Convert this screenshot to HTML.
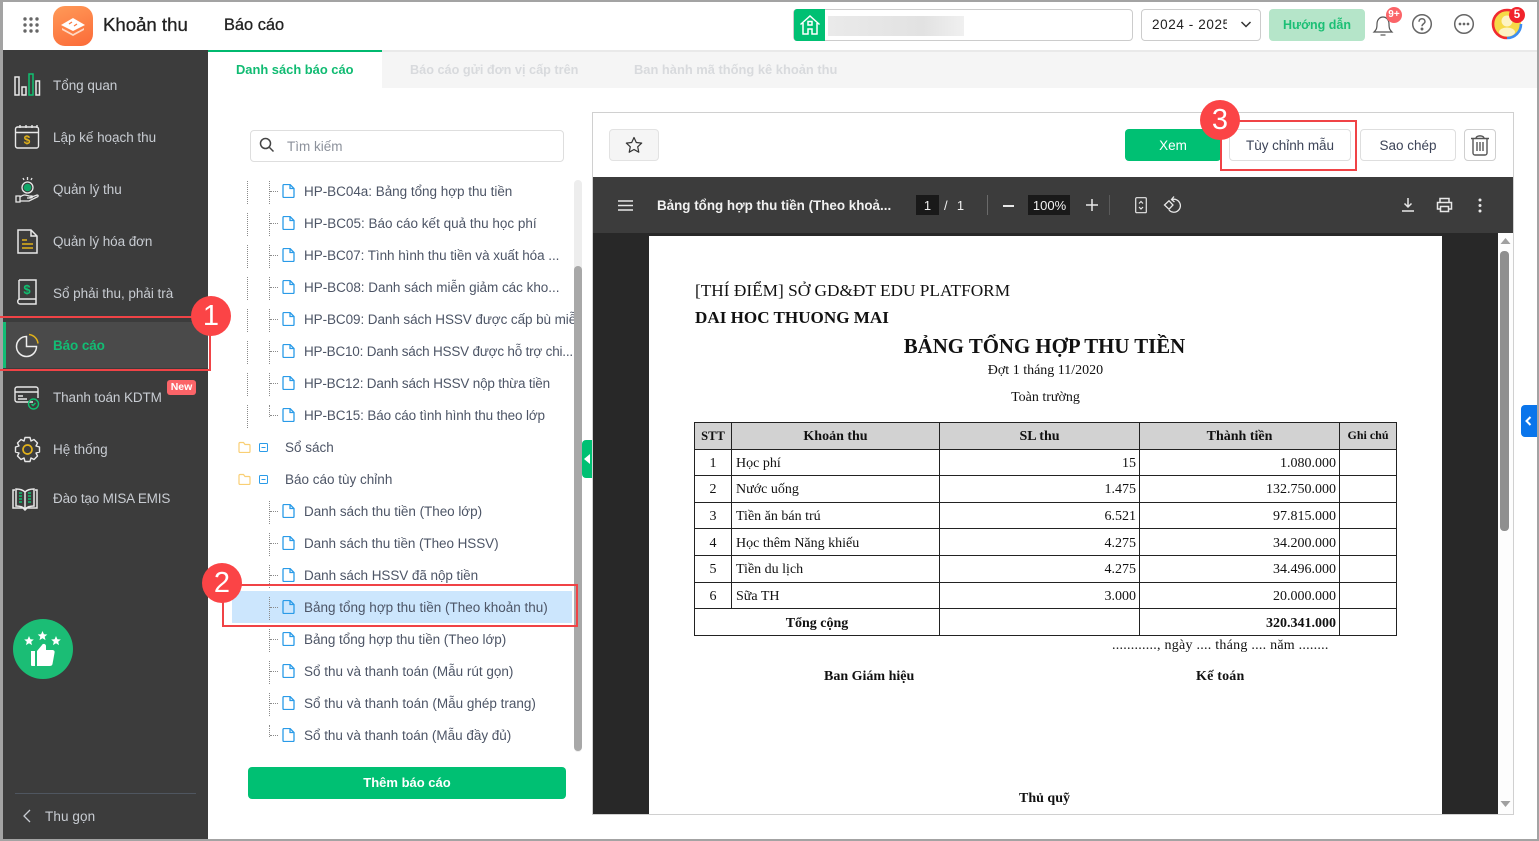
<!DOCTYPE html>
<html lang="vi"><head><meta charset="utf-8"><title>Khoản thu</title>
<style>
html,body{margin:0;padding:0;background:#fff}
#r{position:relative;width:1539px;height:841px;overflow:hidden;background:#fff;font-family:"Liberation Sans",sans-serif;color:#333}
#r div,#r svg{position:absolute}
.t{white-space:nowrap}
.s{left:53px;font-size:13.5px;line-height:20px;color:#c8ccd2;letter-spacing:-.03px}
.n{left:304px;font-size:13.5px;line-height:20px;color:#4d5566;white-space:nowrap}
.v1{width:0;border-left:1px dotted #8a8a8a;height:23px}
.h1{height:0;width:8px;border-top:1px dotted #8a8a8a;left:270px}
.p{font-family:"Liberation Serif",serif;color:#111;white-space:nowrap;line-height:16px;font-size:14px}
.b{font-weight:bold}
.ln{background:#222}
.btn{border:1px solid #dedede;border-radius:4px;box-sizing:border-box;background:#fff;text-align:center;line-height:31px;font-size:13.5px;color:#3d4458;top:129px;height:32px}
.red{border:2px solid #f04346;box-sizing:border-box}
.bd{width:40px;height:40px;border-radius:50%;background:#fb4446;color:#fff;text-align:center;font-size:29px;line-height:40px}
</style></head><body><div id="r">

<!-- header -->
<div style="left:0;top:50px;width:1539px;height:2px;background:#e9e9e9"></div>
<svg style="left:23px;top:17px" width="16" height="16" fill="#666"><circle cx="2" cy="2" r="1.7"/><circle cx="8" cy="2" r="1.7"/><circle cx="14" cy="2" r="1.7"/><circle cx="2" cy="8" r="1.7"/><circle cx="8" cy="8" r="1.7"/><circle cx="14" cy="8" r="1.7"/><circle cx="2" cy="14" r="1.7"/><circle cx="8" cy="14" r="1.7"/><circle cx="14" cy="14" r="1.7"/></svg>
<div style="left:53px;top:6px;width:40px;height:40px;border-radius:12px;background:linear-gradient(160deg,#ff9a58,#fb6a38)"></div>
<svg style="left:60px;top:15px" width="26" height="24"><path d="M13 3L25 10 13 16 1 10Z" fill="#fff"/><path d="M2 13l11 6 11-6v2l-11 6-11-6z" fill="#ffd8c4"/><path d="M9 9l3-2M17 9l-3 2" stroke="#fb7a40" stroke-width="1.3"/></svg>
<div class="t" style="left:103px;top:13px;font-size:18.6px;line-height:24px;color:#222;-webkit-text-stroke:.3px #222">Khoản thu</div>
<div class="t" style="left:224px;top:14px;font-size:16.4px;line-height:22px;color:#222;-webkit-text-stroke:.3px #222">Báo cáo</div>

<div style="left:793px;top:9px;width:340px;height:32px;border:1px solid #ccc;border-radius:4px;box-sizing:border-box"></div>
<div style="left:794px;top:9px;width:31px;height:32px;background:#00c073;border-radius:3px 0 0 3px"></div>
<svg style="left:799px;top:14px" width="22" height="22" fill="none" stroke="#fff" stroke-width="1.5"><path d="M1.5 10.500L11 2l9.500 8.500M4 9v11h5v-5h4v5h5V9"/><rect x="9" y="7.500" width="4" height="3.500"/></svg>
<div style="left:828px;top:16px;width:136px;height:20px;background:linear-gradient(90deg,#eaeaea,#e2e2e2 70%,#f0f0f0)"></div>

<div style="left:1141px;top:9px;width:120px;height:32px;border:1px solid #ccc;border-radius:4px;box-sizing:border-box"></div>
<div class="t" style="left:1152px;top:15px;width:75px;overflow:hidden;font-size:13.5px;line-height:20px;color:#222;letter-spacing:.6px">2024 - 2025</div>
<svg style="left:1240px;top:20px" width="12" height="10" fill="none" stroke="#333" stroke-width="1.5"><path d="M1.500 2l4.500 4.500L10.500 2"/></svg>
<div class="t" style="left:1269px;top:9px;width:96px;height:32px;background:#b5e5c9;border-radius:4px;text-align:center;line-height:33px;font-size:12.5px;font-weight:bold;color:#1cbf75">Hướng dẫn</div>

<svg style="left:1371px;top:13px" width="24" height="25" fill="none" stroke="#555" stroke-width="1.2"><path d="M3 19c2-2 3-3 3-8 0-4 2.500-7 6-7s6 3 6 7c0 5 1 6 3 8z"/><path d="M9.500 22h5"/></svg>
<div class="t" style="left:1386px;top:7px;width:16px;height:16px;border-radius:50%;background:#fb6468;color:#fff;font-size:10px;font-weight:bold;line-height:16px;text-align:center">9+</div>
<svg style="left:1411px;top:13px" width="22" height="22" fill="none" stroke="#666" stroke-width="1.500"><circle cx="11" cy="11" r="9.300"/><path d="M8 8.700c0-4 6-4 6 0 0 2-3 2.200-3 4.500"/><circle cx="11" cy="16" r=".7" fill="#666"/></svg>
<svg style="left:1453px;top:13px" width="22" height="22" fill="none" stroke="#666" stroke-width="1.500"><circle cx="11" cy="11" r="9.300"/><circle cx="7" cy="11" r=".6" fill="#666"/><circle cx="11" cy="11" r=".6" fill="#666"/><circle cx="15" cy="11" r=".6" fill="#666"/></svg>
<svg style="left:1491px;top:8px" width="34" height="34"><circle cx="16" cy="16" r="14" fill="#f6d947"/><path d="M16 2a14 14 0 0 0 0 28" fill="none" stroke="#f02a30" stroke-width="2.600"/><path d="M16 30a14 14 0 0 0 14-14" fill="none" stroke="#3d8df0" stroke-width="2.600"/><path d="M16 2a14 14 0 0 1 8 2.500" fill="none" stroke="#f02a30" stroke-width="2.600"/><circle cx="16" cy="13" r="5.500" fill="#fdf3c4"/><ellipse cx="16" cy="24" rx="8" ry="4.500" fill="#fdf3c4"/></svg>
<div class="t" style="left:1509px;top:7px;width:16px;height:16px;border-radius:50%;background:#f1232b;color:#fff;font-size:11.500px;font-weight:bold;line-height:16px;text-align:center">5</div>

<!-- sidebar -->
<div style="left:3px;top:50px;width:205px;height:789px;background:#3c3c3c"></div>
<div style="left:3px;top:322px;width:205px;height:46px;background:#4a4a4a"></div>
<div style="left:3px;top:322px;width:3px;height:46px;background:#12bd74"></div>

<svg style="left:14px;top:73px" width="27" height="24" fill="none" stroke="#e8e8e8" stroke-width="1.500"><rect x="1" y="4" width="4" height="18"/><rect x="8" y="14" width="4" height="8"/><rect x="15" y="1" width="4" height="21" stroke="#10c070"/><rect x="22" y="8" width="3.500" height="14"/></svg>
<div class="t s" style="top:76px">Tổng quan</div>

<svg style="left:14px;top:124px" width="27" height="27" fill="none" stroke="#e8e8e8" stroke-width="1.400"><rect x="1.500" y="3" width="23" height="21" rx="2"/><path d="M1.500 8.500h23"/><path d="M6 1v3M12 1v3M18 1v3M23 1v3"/><text x="13" y="20" font-size="12" font-weight="bold" fill="#e2b21a" stroke="none" text-anchor="middle" font-family="Liberation Sans">$</text></svg>
<div class="t s" style="top:128px">Lập kế hoạch thu</div>

<svg style="left:15px;top:176px" width="25" height="27" fill="none" stroke="#e8e8e8" stroke-width="1.300"><circle cx="12.500" cy="11.500" r="5.500"/><path d="M12.500 1v3M8 2l1 2M17 2l-1 2"/><circle cx="12.500" cy="11.500" r="3.800" fill="#10a868" stroke="none"/><path d="M1 20h4v6H1zM5 21c4-3 6-2 9-1h3c1 1 0 2-2 2h-3M14 22l8-3c2 0 1 2 0 2l-8 4H5"/></svg>
<div class="t s" style="top:180px">Quản lý thu</div>

<svg style="left:16px;top:229px" width="23" height="26" fill="none" stroke="#e8e8e8" stroke-width="1.500"><path d="M2 1h13l6 6v17H2z"/><path d="M15 1v6h6"/><path d="M6 11h5M6 15h11M6 19h11" stroke="#e2b21a"/></svg>
<div class="t s" style="top:232px;letter-spacing:-.07px">Quản lý hóa đơn</div>

<svg style="left:16px;top:279px" width="22" height="27" fill="none" stroke="#e8e8e8" stroke-width="1.500"><path d="M3 1h17v19H4c-3 0-3 5 0 5h16v-5M3 1v20"/><text x="11" y="15" font-size="13" font-weight="bold" fill="#10c070" stroke="none" text-anchor="middle" font-family="Liberation Sans">$</text></svg>
<div class="t s" style="top:284px">Sổ phải thu, phải trà</div>

<svg style="left:15px;top:333px" width="25" height="25" fill="none" stroke="#eee" stroke-width="1.500"><path d="M11.500 3.500a10 10 0 1 0 10 10h-10z"/><path d="M14 1.500a10 10 0 0 1 9 9" stroke="#e2b21a"/></svg>
<div class="t s b" style="top:336px;color:#12bd74;letter-spacing:-.1px">Báo cáo</div>

<svg style="left:14px;top:385px" width="27" height="27" fill="none" stroke="#e8e8e8" stroke-width="1.400"><path d="M19 17H3a2 2 0 0 1-2-2V4a2 2 0 0 1 2-2h19a2 2 0 0 1 2 2v9"/><path d="M1 7h23M4 11h5M4 14h9"/><circle cx="19.500" cy="19" r="5" stroke="#10c070"/><path d="M17.500 19l1.500 1.500 2.500-2.500" stroke="#10c070"/></svg>
<div class="t s" style="top:388px;letter-spacing:-.1px">Thanh toán KDTM</div>
<div class="t" style="left:167px;top:380px;width:29px;height:15px;background:#fb6468;border-radius:3px;color:#fff;font-size:10.500px;font-weight:bold;line-height:15px;text-align:center">New</div>

<svg style="left:14px;top:436px" width="27" height="27" fill="none" stroke="#e8e8e8" stroke-width="1.400"><path d="M11 1.500h5l1 3.500 3-1.500 3.500 3.500-1.500 3 3.500 1v5l-3.500 1 1.500 3-3.500 3.500-3-1.500-1 3.500h-5l-1-3.500-3 1.500L3.500 20l1.500-3-3.500-1v-5l3.500-1-1.500-3L7 3.500l3 1.500z" stroke-linejoin="round"/><circle cx="13.500" cy="13.500" r="4.500" stroke="#e2b21a" stroke-width="1.700"/></svg>
<div class="t s" style="top:440px">Hệ thống</div>

<svg style="left:12px;top:487px" width="26" height="24" fill="none" stroke="#e8e8e8" stroke-width="1.500"><path d="M3 3H1v18h10l2 2 2-2h10V3h-2"/><path d="M13 5c-2-2-6-3-9-3v17c3 0 7 1 9 3 2-2 6-3 9-3V2c-3 0-7 1-9 3zM13 5v17"/><path d="M7 6h3M7 9h3M7 12h3M7 15h3M16 6h3M16 9h3M16 12h3M16 15h3" stroke="#10c070"/></svg>
<div class="t s" style="top:489px;letter-spacing:-.17px">Đào tạo MISA EMIS</div>

<div style="left:13px;top:619px;width:60px;height:60px;border-radius:50%;background:#1bbd75"></div>
<svg style="left:24px;top:630px" width="38" height="38" fill="#fff"><path d="M5 6l1.400 3.200 3.400.3-2.600 2.200.8 3.400L5 13.300 2 15.100l.8-3.400L.2 9.500l3.400-.3z"/><path d="M18.500 1l1.400 3.200 3.400.3-2.600 2.200.8 3.400-3-1.800-3 1.800.8-3.400L13.700 4.500l3.400-.3z"/><path d="M32 6l1.400 3.200 3.400.3-2.600 2.200.8 3.400-3-1.800-3 1.800.8-3.400L27.200 9.500l3.400-.3z"/><path d="M7 21h4v15H8a1 1 0 0 1-1-1z"/><path d="M13 21l5-6c1-2 4-1 4 1v4h6c2 0 3 1 2.500 3l-2 11c-.3 1.500-1.500 2-3 2H13z"/></svg>

<div style="left:15px;top:793px;width:181px;height:1px;background:#4f5660"></div>
<svg style="left:22px;top:809px" width="10" height="14" fill="none" stroke="#c8ccd2" stroke-width="1.300"><path d="M8 1L2 7l6 6"/></svg>
<div class="t s" style="left:45px;top:807px;letter-spacing:.1px">Thu gọn</div>

<!-- tabs -->
<div style="left:208px;top:52px;width:1329px;height:36px;background:#f5f5f5"></div>
<div style="left:208px;top:50px;width:174px;height:38px;background:#fff;border-top:2px solid #00b96f;box-sizing:border-box"></div>
<div class="t b" style="left:236px;top:60px;font-size:12.9px;line-height:20px;color:#10bb72">Danh sách báo cáo</div>
<div class="t b" style="left:410px;top:60px;font-size:12.7px;line-height:20px;color:#d8dadd">Báo cáo gửi đơn vị cấp trên</div>
<div class="t b" style="left:634px;top:60px;font-size:12.9px;line-height:20px;color:#d8dadd">Ban hành mã thống kê khoản thu</div>

<!-- left tree -->
<div style="left:250px;top:130px;width:314px;height:32px;border:1px solid #dedede;border-radius:4px;box-sizing:border-box"></div>
<svg style="left:259px;top:137px" width="16" height="16" fill="none" stroke="#444" stroke-width="1.500"><circle cx="6.500" cy="6.500" r="5"/><path d="M10.500 10.500l4 4"/></svg>
<div class="t" style="left:287px;top:137px;font-size:13.5px;line-height:20px;color:#8c919b">Tìm kiếm</div>

<div style="left:232px;top:591px;width:340px;height:32px;background:#cce6fd"></div>

<div class="v1" style="left:247px;top:181px"></div><div class="v1" style="left:247px;top:213px"></div><div class="v1" style="left:247px;top:245px"></div><div class="v1" style="left:247px;top:277px"></div><div class="v1" style="left:247px;top:309px"></div><div class="v1" style="left:247px;top:341px"></div><div class="v1" style="left:247px;top:373px"></div><div class="v1" style="left:247px;top:405px"></div>

<div class="v1" style="left:269px;top:181px"></div><div class="h1" style="top:191px"></div>
<div class="v1" style="left:269px;top:213px"></div><div class="h1" style="top:223px"></div>
<div class="v1" style="left:269px;top:245px"></div><div class="h1" style="top:255px"></div>
<div class="v1" style="left:269px;top:277px"></div><div class="h1" style="top:287px"></div>
<div class="v1" style="left:269px;top:309px"></div><div class="h1" style="top:319px"></div>
<div class="v1" style="left:269px;top:341px"></div><div class="h1" style="top:351px"></div>
<div class="v1" style="left:269px;top:373px"></div><div class="h1" style="top:383px"></div>
<div class="v1" style="left:269px;top:405px;height:12px"></div><div class="h1" style="top:415px"></div>
<div class="v1" style="left:269px;top:501px"></div><div class="h1" style="top:511px"></div>
<div class="v1" style="left:269px;top:533px"></div><div class="h1" style="top:543px"></div>
<div class="v1" style="left:269px;top:565px"></div><div class="h1" style="top:575px"></div>
<div class="v1" style="left:269px;top:597px"></div><div class="h1" style="top:607px"></div>
<div class="v1" style="left:269px;top:629px"></div><div class="h1" style="top:639px"></div>
<div class="v1" style="left:269px;top:661px"></div><div class="h1" style="top:671px"></div>
<div class="v1" style="left:269px;top:693px"></div><div class="h1" style="top:703px"></div>
<div class="v1" style="left:269px;top:725px;height:12px"></div><div class="h1" style="top:735px"></div>

<svg width="0" height="0" style="left:0;top:0"><defs><g id="f"><path d="M1 1.500a1 1 0 0 1 1-1h6l4 4v8a1 1 0 0 1-1 1H2a1 1 0 0 1-1-1zM8 .5v4h4" fill="none" stroke="#2a9be8" stroke-width="1.300"/></g><g id="fd"><path d="M1 2.500a1 1 0 0 1 1-1h3.500l1.500 2h4a1 1 0 0 1 1 1v6a1 1 0 0 1-1 1H2a1 1 0 0 1-1-1z" fill="none" stroke="#f9cf74" stroke-width="1.200"/></g><g id="m"><rect x=".5" y=".5" width="8" height="8" rx="1" fill="none" stroke="#2a9be8"/><path d="M2.500 4.500h4" stroke="#2a9be8"/></g></defs></svg>

<svg style="left:282px;top:184px" width="13" height="14"><use href="#f"/></svg>
<svg style="left:282px;top:216px" width="13" height="14"><use href="#f"/></svg>
<svg style="left:282px;top:248px" width="13" height="14"><use href="#f"/></svg>
<svg style="left:282px;top:280px" width="13" height="14"><use href="#f"/></svg>
<svg style="left:282px;top:312px" width="13" height="14"><use href="#f"/></svg>
<svg style="left:282px;top:344px" width="13" height="14"><use href="#f"/></svg>
<svg style="left:282px;top:376px" width="13" height="14"><use href="#f"/></svg>
<svg style="left:282px;top:408px" width="13" height="14"><use href="#f"/></svg>
<svg style="left:282px;top:504px" width="13" height="14"><use href="#f"/></svg>
<svg style="left:282px;top:536px" width="13" height="14"><use href="#f"/></svg>
<svg style="left:282px;top:568px" width="13" height="14"><use href="#f"/></svg>
<svg style="left:282px;top:600px" width="13" height="14"><use href="#f"/></svg>
<svg style="left:282px;top:632px" width="13" height="14"><use href="#f"/></svg>
<svg style="left:282px;top:664px" width="13" height="14"><use href="#f"/></svg>
<svg style="left:282px;top:696px" width="13" height="14"><use href="#f"/></svg>
<svg style="left:282px;top:728px" width="13" height="14"><use href="#f"/></svg>

<svg style="left:238px;top:441px" width="13" height="12"><use href="#fd"/></svg>
<svg style="left:238px;top:473px" width="13" height="12"><use href="#fd"/></svg>
<svg style="left:259px;top:443px" width="9" height="9"><use href="#m"/></svg>
<svg style="left:259px;top:475px" width="9" height="9"><use href="#m"/></svg>

<div class="n" style="top:182px;letter-spacing:-.03px">HP-BC04a: Bảng tổng hợp thu tiền</div>
<div class="n" style="top:214px">HP-BC05: Báo cáo kết quả thu học phí</div>
<div class="n" style="top:246px;letter-spacing:-.06px">HP-BC07: Tình hình thu tiền và xuất hóa ...</div>
<div class="n" style="top:278px;letter-spacing:-.03px">HP-BC08: Danh sách miễn giảm các kho...</div>
<div class="n" style="top:310px;width:271px;overflow:hidden;letter-spacing:-.08px">HP-BC09: Danh sách HSSV được cấp bù miễn giảm</div>
<div class="n" style="top:342px;letter-spacing:-.2px">HP-BC10: Danh sách HSSV được hỗ trợ chi...</div>
<div class="n" style="top:374px;letter-spacing:-.19px">HP-BC12: Danh sách HSSV nộp thừa tiền</div>
<div class="n" style="top:406px;letter-spacing:-.13px">HP-BC15: Báo cáo tình hình thu theo lớp</div>
<div class="n" style="left:285px;top:438px">Sổ sách</div>
<div class="n" style="left:285px;top:470px">Báo cáo tùy chỉnh</div>
<div class="n" style="top:502px;letter-spacing:-.04px">Danh sách thu tiền (Theo lớp)</div>
<div class="n" style="top:534px;letter-spacing:-.07px">Danh sách thu tiền (Theo HSSV)</div>
<div class="n" style="top:566px;letter-spacing:-.06px">Danh sách HSSV đã nộp tiền</div>
<div class="n" style="top:598px">Bảng tổng hợp thu tiền (Theo khoản thu)</div>
<div class="n" style="top:630px;letter-spacing:-.05px">Bảng tổng hợp thu tiền (Theo lớp)</div>
<div class="n" style="top:662px">Sổ thu và thanh toán (Mẫu rút gọn)</div>
<div class="n" style="top:694px">Sổ thu và thanh toán (Mẫu ghép trang)</div>
<div class="n" style="top:726px;letter-spacing:-.02px">Sổ thu và thanh toán (Mẫu đầy đủ)</div>

<div style="left:574px;top:180px;width:8px;height:572px;background:#ededed;border-radius:4px"></div>
<div style="left:574px;top:266px;width:8px;height:485px;background:#a8a8a8;border-radius:4px"></div>
<div style="left:582px;top:440px;width:10px;height:38px;background:#00c073;border-radius:4px 0 0 4px"></div>
<svg style="left:584px;top:454px" width="7" height="10" fill="#fff"><path d="M6 0v10L0 5z"/></svg>

<div class="t" style="left:248px;top:767px;width:318px;height:32px;background:#00c073;border-radius:4px;color:#fff;font-size:13px;font-weight:bold;line-height:32px;text-align:center">Thêm báo cáo</div>

<!-- right panel -->
<div style="left:592px;top:112px;width:922px;height:703px;border:1px solid #d0d0d0;box-sizing:border-box"></div>
<div style="left:609px;top:129px;width:50px;height:32px;background:#f5f5f5;border:1px solid #e2e2e2;border-radius:4px;box-sizing:border-box"></div>
<svg style="left:625px;top:136px" width="18" height="18" fill="none" stroke="#333" stroke-width="1.200"><path d="M9 1.500l2.300 5 5.400.6-4 3.700 1.100 5.400L9 13.500l-4.800 2.700 1.100-5.400-4-3.700 5.400-.6z" stroke-linejoin="round"/></svg>

<div class="t" style="left:1125px;top:129px;width:96px;height:32px;background:#00c073;border-radius:4px;color:#fff;font-size:13.5px;line-height:33px;text-align:center">Xem</div>
<div class="btn t" style="left:1229px;width:122px;letter-spacing:-.05px">Tùy chỉnh mẫu</div>
<div class="btn t" style="left:1360px;width:96px">Sao chép</div>
<div class="btn" style="left:1464px;width:32px;border-color:#cfcfcf"></div>
<svg style="left:1470px;top:134px" width="20" height="22" fill="none" stroke="#555" stroke-width="1.400"><path d="M1 4.500h18M6 4.500C6 1 14 1 14 4.500M3 4.500V19a2 2 0 0 0 2 2h10a2 2 0 0 0 2-2V4.500M7 8v9M10 8v9M13 8v9"/></svg>

<!-- pdf -->
<div style="left:593px;top:177px;width:920px;height:56px;background:#3c3c3c"></div>
<div style="left:593px;top:233px;width:905px;height:581px;background:#282828"></div>
<div style="left:1498px;top:233px;width:15px;height:581px;background:#fdfdfd"></div>
<svg style="left:1500px;top:238px" width="11" height="7" fill="#a0a0a0"><path d="M5.500 0L10.500 6H.5z"/></svg>
<svg style="left:1500px;top:801px" width="11" height="7" fill="#a0a0a0"><path d="M.5 0h10l-5 6z"/></svg>
<div style="left:1500px;top:251px;width:9px;height:280px;background:#8f8f8f;border-radius:4px"></div>
<div style="left:649px;top:236px;width:793px;height:578px;background:#fff"></div>

<svg style="left:618px;top:200px" width="15" height="11" stroke="#e8e8e8" stroke-width="1.500"><path d="M0 1h15M0 5.500h15M0 10h15"/></svg>
<div class="t b" style="left:657px;top:196px;font-size:13.4px;line-height:20px;color:#f1f1f1">Bảng tổng hợp thu tiền (Theo khoả...</div>
<div class="t" style="left:916px;top:195px;width:23px;height:20px;background:#191919;color:#f1f1f1;font-size:13px;line-height:22px;text-align:center">1</div>
<div class="t" style="left:944px;top:196px;font-size:13px;line-height:20px;color:#f1f1f1;word-spacing:1px">/&nbsp;&nbsp;1</div>
<div style="left:987px;top:195px;width:1px;height:20px;background:#6a6a6a"></div>
<div style="left:1003px;top:205px;width:11px;height:1.500px;background:#e8e8e8"></div>
<div class="t" style="left:1028px;top:195px;width:42px;height:20px;background:#191919;color:#f1f1f1;font-size:13px;line-height:22px;text-align:center;padding-left:1px;box-sizing:border-box">100%</div>
<svg style="left:1086px;top:199px" width="12" height="12" stroke="#e8e8e8" stroke-width="1.500"><path d="M0 6h12M6 0v12"/></svg>
<div style="left:1109px;top:195px;width:1px;height:20px;background:#5a5a5a"></div>
<svg style="left:1135px;top:197px" width="12" height="17" fill="none" stroke="#e8e8e8" stroke-width="1.200"><rect x=".7" y=".7" width="10.600" height="15" rx="1"/><path d="M4 6.500l2-2 2 2M4 10l2 2 2-2"/></svg>
<svg style="left:1163px;top:196px" width="20" height="18" fill="none" stroke="#e8e8e8" stroke-width="1.300"><path d="M9 3.500a6.500 6.500 0 1 1-3 10.500"/><path d="M11 .5L8.500 3.500l3 2.500"/><path d="M1.500 9L6 4.800 10 9l-4 4.200z"/></svg>
<svg style="left:1401px;top:197px" width="14" height="16" fill="none" stroke="#e8e8e8" stroke-width="1.500"><path d="M7 1v9M3.500 6.500L7 10l3.500-3.500M1 14h12"/></svg>
<svg style="left:1436px;top:197px" width="17" height="16" fill="none" stroke="#e8e8e8" stroke-width="1.500"><path d="M4 5V1.500h9V5M4 12H1.500V5.500h14V12H13"/><rect x="4.500" y="9.500" width="8" height="5"/></svg>
<svg style="left:1478px;top:198px" width="4" height="15" fill="#e8e8e8"><circle cx="2" cy="2" r="1.500"/><circle cx="2" cy="7.500" r="1.500"/><circle cx="2" cy="13" r="1.500"/></svg>

<!-- document -->
<div class="p" style="left:695px;top:281px;font-size:17.3px;line-height:20px">[THÍ ĐIỂM] SỞ GD&amp;ĐT EDU PLATFORM</div>
<div class="p b" style="left:695px;top:308px;font-size:17.1px;line-height:20px">DAI HOC THUONG MAI</div>
<div class="p b" style="left:648px;width:793px;text-align:center;top:334px;font-size:20.85px;line-height:24px">BẢNG TỔNG HỢP THU TIỀN</div>
<div class="p" style="left:649px;width:793px;text-align:center;top:363px">Đợt 1 tháng 11/2020</div>
<div class="p" style="left:649px;width:793px;text-align:center;top:390px">Toàn trường</div>

<div style="left:695px;top:423px;width:702px;height:26px;background:#d2d2d2"></div>
<div class="ln" style="left:694px;top:422px;width:703px;height:1px"></div>
<div class="ln" style="left:694px;top:449px;width:703px;height:1px"></div>
<div class="ln" style="left:694px;top:475px;width:703px;height:1px"></div>
<div class="ln" style="left:694px;top:502px;width:703px;height:1px"></div>
<div class="ln" style="left:694px;top:528px;width:703px;height:1px"></div>
<div class="ln" style="left:694px;top:555px;width:703px;height:1px"></div>
<div class="ln" style="left:694px;top:582px;width:703px;height:1px"></div>
<div class="ln" style="left:694px;top:608px;width:703px;height:1px"></div>
<div class="ln" style="left:694px;top:635px;width:703px;height:1px"></div>
<div class="ln" style="left:694px;top:422px;width:1px;height:214px"></div>
<div class="ln" style="left:731px;top:422px;width:1px;height:187px"></div>
<div class="ln" style="left:939px;top:422px;width:1px;height:214px"></div>
<div class="ln" style="left:1139px;top:422px;width:1px;height:214px"></div>
<div class="ln" style="left:1339px;top:422px;width:1px;height:214px"></div>
<div class="ln" style="left:1396px;top:422px;width:1px;height:214px"></div>

<div class="p b" style="left:695px;width:36px;text-align:center;top:428px;font-size:12.5px">STT</div>
<div class="p b" style="left:732px;width:207px;text-align:center;top:429px">Khoản thu</div>
<div class="p b" style="left:940px;width:199px;text-align:center;top:429px">SL thu</div>
<div class="p b" style="left:1140px;width:199px;text-align:center;top:429px">Thành tiền</div>
<div class="p b" style="left:1340px;width:56px;text-align:center;top:427px;font-size:12px">Ghi chú</div>

<div class="p" style="left:695px;width:36px;text-align:center;top:456px">1</div><div class="p" style="left:736px;top:456px">Học phí</div><div class="p" style="left:940px;width:196px;text-align:right;top:456px">15</div><div class="p" style="left:1140px;width:196px;text-align:right;top:456px">1.080.000</div>
<div class="p" style="left:695px;width:36px;text-align:center;top:482px">2</div><div class="p" style="left:736px;top:482px">Nước uống</div><div class="p" style="left:940px;width:196px;text-align:right;top:482px">1.475</div><div class="p" style="left:1140px;width:196px;text-align:right;top:482px">132.750.000</div>
<div class="p" style="left:695px;width:36px;text-align:center;top:509px">3</div><div class="p" style="left:736px;top:509px">Tiền ăn bán trú</div><div class="p" style="left:940px;width:196px;text-align:right;top:509px">6.521</div><div class="p" style="left:1140px;width:196px;text-align:right;top:509px">97.815.000</div>
<div class="p" style="left:695px;width:36px;text-align:center;top:536px">4</div><div class="p" style="left:736px;top:536px">Học thêm Năng khiếu</div><div class="p" style="left:940px;width:196px;text-align:right;top:536px">4.275</div><div class="p" style="left:1140px;width:196px;text-align:right;top:536px">34.200.000</div>
<div class="p" style="left:695px;width:36px;text-align:center;top:562px">5</div><div class="p" style="left:736px;top:562px">Tiền du lịch</div><div class="p" style="left:940px;width:196px;text-align:right;top:562px">4.275</div><div class="p" style="left:1140px;width:196px;text-align:right;top:562px">34.496.000</div>
<div class="p" style="left:695px;width:36px;text-align:center;top:589px">6</div><div class="p" style="left:736px;top:589px">Sữa TH</div><div class="p" style="left:940px;width:196px;text-align:right;top:589px">3.000</div><div class="p" style="left:1140px;width:196px;text-align:right;top:589px">20.000.000</div>
<div class="p b" style="left:695px;width:244px;text-align:center;top:616px">Tổng cộng</div><div class="p b" style="left:1140px;width:196px;text-align:right;top:616px">320.341.000</div>

<div class="p" style="left:1112px;top:638px;letter-spacing:.25px">............, ngày .... tháng .... năm ........</div>
<div class="p b" style="left:824px;top:669px">Ban Giám hiệu</div>
<div class="p b" style="left:1196px;top:669px;letter-spacing:.2px">Kế toán</div>
<div class="p b" style="left:1019px;top:791px">Thủ quỹ</div>

<div style="left:1521px;top:405px;width:16px;height:32px;background:#0a75eb;border-radius:4px 0 0 4px"></div>
<svg style="left:1525px;top:416px" width="7" height="10" fill="none" stroke="#fff" stroke-width="2"><path d="M5.500 1L1.500 5l4 4"/></svg>

<!-- frame -->
<div style="left:0;top:0;width:1539px;height:2px;background:#a3a3a3"></div>
<div style="left:0;top:839px;width:1539px;height:2px;background:#a3a3a3"></div>
<div style="left:0;top:0;width:3px;height:841px;background:#a3a3a3"></div>
<div style="left:1537px;top:0;width:2px;height:841px;background:#a3a3a3"></div>

<!-- annotations -->
<div class="red" style="left:0;top:316px;width:211px;height:55px;border-left:0"></div>
<div class="red" style="left:222px;top:584px;width:356px;height:43px"></div>
<div class="red" style="left:1220px;top:120px;width:137px;height:51px"></div>
<div class="bd" style="left:191px;top:296px">1</div>
<div class="bd" style="left:202px;top:563px">2</div>
<div class="bd" style="left:1200px;top:100px">3</div>
</div></body></html>
